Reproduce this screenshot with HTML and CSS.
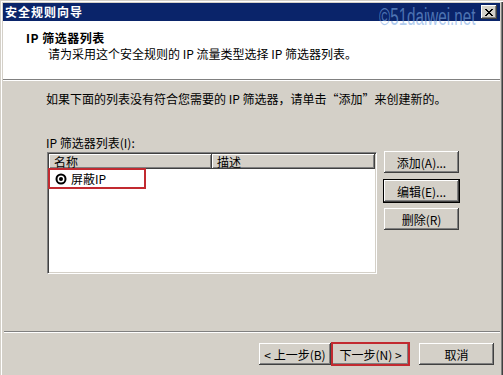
FILE: index.html
```html
<!DOCTYPE html>
<html lang="zh-CN">
<head>
  <meta charset="UTF-8" />
  <title>安全规则向导</title>
  <link rel="stylesheet" href="styles.css">
</head>
<body>

<div class="janela">
  <!-- barra de título -->
  <div class="barra">
    <span class="barra-titulo">安全规则向导</span>
    <span class="fechar">
      <svg width="8" height="7" viewBox="0 0 8 7">
        <path d="M0 0 L7 7 M1 0 L8 7 M7 0 L0 7 M8 0 L1 7" stroke="#000" stroke-width="1"/>
      </svg>
    </span>
  </div>

  <!-- cabeçalho branco -->
  <div class="cabecalho">
    <div class="cab-titulo">IP 筛选器列表</div>
    <div class="cab-sub">请为采用这个安全规则的 IP 流量类型选择 IP 筛选器列表。</div>
  </div>

  <div class="conteudo">
    <div class="intro">如果下面的列表没有符合您需要的 IP 筛选器，请单击“添加”来创建新的。</div>
    <div class="rotulo">IP 筛选器列表(I):</div>

    <div class="linha-lista">
      <div class="lista">
        <div class="lista-cab">
          <div class="col col-nome">名称</div>
          <div class="col col-desc">描述</div>
        </div>
        <div class="item marcado">
          <svg class="radio" width="12" height="12" viewBox="0 0 12 12">
            <circle cx="6" cy="6" r="4.5" fill="#fff" stroke="#000" stroke-width="2"/>
            <circle cx="6" cy="6" r="2" fill="#000"/>
          </svg>
          <span>屏蔽IP</span>
        </div>
      </div>

      <div class="botoes-lado">
        <button>添加(A)...</button>
        <button class="foco">编辑(E)...</button>
        <button>删除(R)</button>
      </div>
    </div>
  </div>

  <div class="separador"></div>

  <div class="rodape">
    <button class="btn-voltar">&lt; 上一步(B)</button>
    <button class="btn-proximo">下一步(N) &gt;</button>
    <button class="btn-cancelar">取消</button>
  </div>

  <div class="marca-dagua">©51daiwei.net</div>
</div>

</body>
</html>
```

FILE: styles.css
```css
body {
  margin: 0;
  background-color: #d4d0c8;
  font-family: "Noto Sans CJK SC", "Liberation Sans", sans-serif;
  font-size: 12px;
  color: #000;
}

.janela {
  position: relative;
  width: 503px;
  height: 375px;
  box-sizing: border-box;
  padding: 3px 3px 0 3px;
  background-color: #d4d0c8;
  box-shadow: inset 1px 1px #d4d0c8, inset 2px 2px #fff, inset -1px 0 #404040, inset -2px 0 #808080;
  overflow: hidden;
}

.barra {
  height: 18px;
  background-color: #0a246a;
  display: flex;
  align-items: center;
  justify-content: space-between;
  padding: 0 3px 0 2px;
}

.barra-titulo {
  color: #fff;
  font-weight: bold;
  letter-spacing: 1px;
  line-height: 18px;
}

.fechar {
  width: 16px;
  height: 14px;
  background-color: #d4d0c8;
  box-shadow: inset -1px -1px #404040, inset 1px 1px #fff, inset -2px -2px #808080;
  display: flex;
  align-items: center;
  justify-content: center;
}

.cabecalho {
  height: 59px;
  box-sizing: border-box;
  background-color: #fff;
  border-bottom: 1px solid #808080;
  padding-top: 10px;
}

.cab-titulo {
  font-weight: bold;
  line-height: 14px;
  padding-left: 23px;
  letter-spacing: 0.5px;
}

.cab-sub {
  line-height: 14px;
  margin-top: 2px;
  padding-left: 45px;
}

.conteudo {
  height: 251px;
  box-sizing: border-box;
  border-top: 1px solid #fff;
  padding: 11px 0 0 43px;
}

.intro {
  line-height: 14px;
}

.rotulo {
  line-height: 14px;
  margin-top: 30px;
}

.linha-lista {
  display: flex;
  align-items: flex-start;
  margin-top: 2px;
  margin-left: 1px;
}

.lista {
  width: 330px;
  height: 122px;
  box-sizing: border-box;
  background-color: #fff;
  border: 1px solid;
  border-color: #808080 #fff #fff #808080;
  box-shadow: inset 1px 1px #404040, inset -1px -1px #d4d0c8;
  padding: 1px;
}

.lista-cab {
  display: flex;
  height: 15px;
}

.col {
  background-color: #d4d0c8;
  box-shadow: inset -1px -1px #404040, inset 1px 1px #fff, inset -2px -2px #808080;
  line-height: 15px;
  padding-left: 5px;
  box-sizing: border-box;
}

.col-nome {
  width: 163px;
}

.col-desc {
  flex: 1;
}

.item {
  display: flex;
  align-items: center;
  gap: 4px;
  height: 19px;
  width: 96px;
  box-sizing: border-box;
  padding-left: 6px;
}

.item.marcado {
  outline: 2px solid #c22a30;
  outline-offset: -1px;
}

.botoes-lado {
  display: flex;
  flex-direction: column;
  gap: 6px;
  margin-left: 7px;
  margin-top: -1px;
}

button {
  width: 75px;
  height: 22px;
  padding: 0;
  border: none;
  background-color: #d4d0c8;
  box-shadow: inset -1px -1px #404040, inset 1px 1px #fff, inset -2px -2px #808080;
  font-family: "Noto Sans CJK SC", "Liberation Sans", sans-serif;
  font-size: 12px;
  color: #000;
}

.botoes-lado .foco {
  outline: 1px solid #000;
  margin-top: 1px;
}

.separador {
  margin-left: 1px;
  border-top: 1px solid #808080;
  border-bottom: 1px solid #fff;
}

.rodape {
  display: flex;
  justify-content: flex-end;
  align-items: center;
  padding: 10px 6px 0 0;
}

.btn-voltar {
  width: 72px;
  margin-right: 1px;
}

.btn-proximo {
  width: 77px;
  outline: 2px solid #c22a30;
  outline-offset: -1px;
}

.btn-cancelar {
  margin-left: 10px;
}

.marca-dagua {
  position: absolute;
  left: 379px;
  top: 6px;
  font-family: "Liberation Sans", sans-serif;
  font-size: 23px;
  line-height: 23px;
  color: rgba(125, 170, 228, 0.6);
  transform: scaleX(0.66);
  transform-origin: left top;
  white-space: nowrap;
}
```
